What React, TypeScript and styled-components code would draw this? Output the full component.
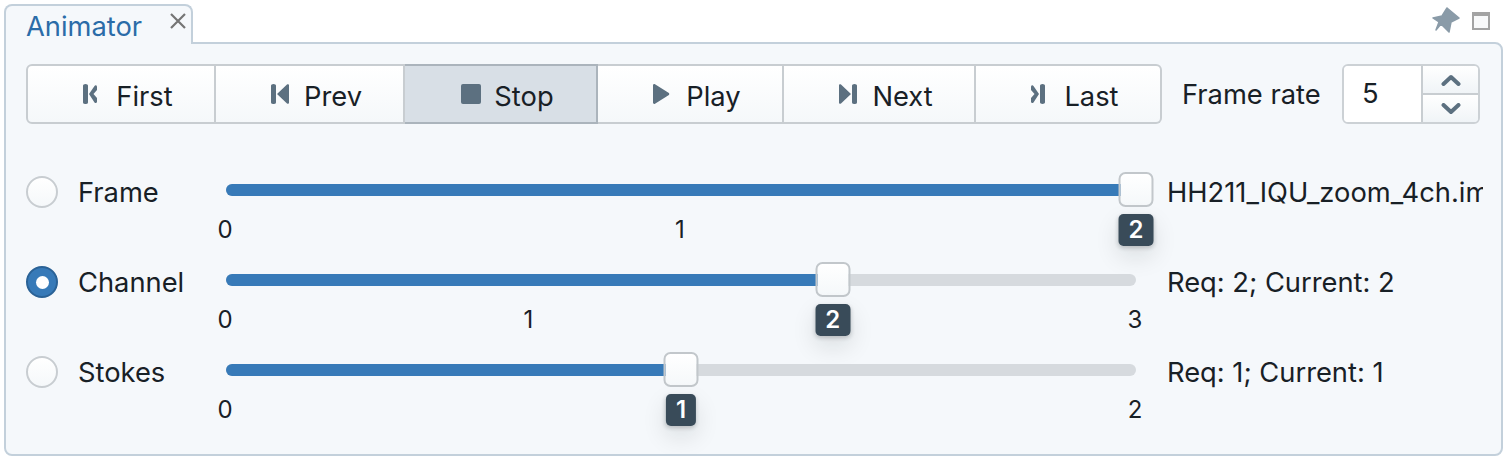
import { createGlobalStyle, styled } from "styled-components";

const GlobalStyle = createGlobalStyle`
  html, body {
    margin: 0;
    padding: 0;
    background: #ffffff;
  }
  body {
    font-family: Inter, "Liberation Sans", sans-serif;
    font-size: 27.3px;
    color: #182026;
  }
`;

const Page = styled.div`
  width: 1512px;
  height: 464px;
  padding: 4px 9px 8px 4px;
  box-sizing: border-box;
  display: flex;
  flex-direction: column;
`;

const TabBar = styled.div`
  display: flex;
  justify-content: space-between;
  height: 38px;
  position: relative;
  z-index: 1;
`;

const Tab = styled.div`
  width: 189px;
  height: 40px;
  box-sizing: border-box;
  background: #f5f8fb;
  border: 2px solid #c3d0db;
  border-bottom: none;
  border-radius: 8px 8px 0 0;
  display: flex;
  justify-content: space-between;
  padding: 0 5px 0 20px;
`;

const TabTitle = styled.span`
  color: #2b6ca8;
  line-height: 42px;
`;

const CloseButton = styled.svg`
  width: 16px;
  height: 16px;
  margin-top: 7px;
`;

const PanelControls = styled.div`
  display: flex;
  align-items: flex-start;
  gap: 12px;
  padding: 2px 13px 0 0;
`;

const PinIcon = styled.svg`
  width: 28px;
  height: 28px;
`;

const MaximizeBox = styled.div`
  width: 18px;
  height: 18px;
  box-sizing: border-box;
  margin-top: 6px;
  border: 2px solid #a3a3a3;
  border-top-width: 4px;
  background: #f8f9fa;
`;

const Panel = styled.div`
  flex: 1;
  box-sizing: border-box;
  background: #f5f8fb;
  border: 2px solid #c3d0db;
  border-radius: 0 8px 8px 8px;
  padding: 20px 18px 0 20px;
  overflow: hidden;
`;

const Toolbar = styled.div`
  display: flex;
  align-items: center;
  height: 60px;
`;

const ButtonGroup = styled.div`
  display: flex;
  height: 60px;
`;

const ToolButton = styled.div<{ $width: number; $active?: boolean }>`
  width: ${(p) => p.$width}px;
  box-sizing: border-box;
  display: flex;
  align-items: center;
  justify-content: center;
  gap: 13px;
  padding: 4px 0 0 14px;
  border: 2px solid ${(p) => (p.$active ? "#abb4bc" : "#c8cdd1")};
  border-left-width: 0;
  background: ${(p) =>
    p.$active ? "#d8dfe6" : "linear-gradient(#ffffff, #f5f8fa)"};
  &:first-child {
    border-left-width: 2px;
    border-radius: 6px 0 0 6px;
  }
  &:last-child {
    border-radius: 0 6px 6px 0;
  }
`;

const ButtonIcon = styled.svg`
  width: 20px;
  height: 20px;
  margin-top: -4px;
  fill: #5c7080;
`;

const RateLabel = styled.span`
  margin-left: 20px;
  width: 160px;
`;

const Spinner = styled.div`
  width: 138px;
  height: 60px;
  box-sizing: border-box;
  display: flex;
  border: 2px solid #ccd1d5;
  border-radius: 6px;
  overflow: hidden;
`;

const SpinnerValue = styled.div`
  width: 77px;
  background: #ffffff;
  padding-left: 18px;
  box-sizing: border-box;
  line-height: 56px;
`;

const SpinnerButtons = styled.div`
  flex: 1;
  display: flex;
  flex-direction: column;
  border-left: 2px solid #c8cdd1;
`;

const SpinnerButton = styled.div`
  flex: 1;
  display: flex;
  align-items: center;
  justify-content: center;
  background: linear-gradient(#ffffff, #f0f4f7);
  & + & {
    border-top: 2px solid #c8cdd1;
  }
`;

const Chevron = styled.svg`
  width: 20px;
  height: 12px;
`;

const Rows = styled.div`
  display: flex;
  flex-direction: column;
  margin-top: 40px;
`;

const Row = styled.div`
  height: 90px;
  display: flex;
  align-items: flex-start;
`;

const Radio = styled.div<{ $checked?: boolean }>`
  width: 32px;
  height: 32px;
  margin-top: 12px;
  box-sizing: border-box;
  flex: none;
  border-radius: 50%;
  border: 2px solid ${(p) => (p.$checked ? "#2a6296" : "#c8cdd1")};
  background: ${(p) =>
    p.$checked ? "#377ab8" : "linear-gradient(#ffffff, #f5f8fa)"};
  display: flex;
  align-items: center;
  justify-content: center;
  &::after {
    content: "";
    width: 13px;
    height: 13px;
    border-radius: 50%;
    background: ${(p) => (p.$checked ? "#ffffff" : "transparent")};
  }
`;

const RowLabel = styled.span`
  width: 148px;
  margin-left: 20px;
  flex: none;
  line-height: 34px;
  margin-top: 12px;
`;

const Slider = styled.div`
  position: relative;
  width: 910px;
  height: 12px;
  margin-top: 20px;
  flex: none;
  background: #d6dade;
  border-radius: 6px;
`;

const SliderFill = styled.div`
  height: 12px;
  background: #377ab8;
  border-radius: 6px 0 0 6px;
`;

const Tick = styled.span`
  position: absolute;
  top: 32px;
  line-height: 28px;
  font-size: 24px;
  transform: translateX(calc(-50% - 1px));
`;

const Handle = styled.div`
  position: absolute;
  top: -12px;
  width: 35px;
  height: 35px;
  box-sizing: border-box;
  transform: translateX(-50%);
  background: linear-gradient(#ffffff, #f5f8fa);
  border: 2px solid #c2c7cb;
  border-radius: 7px;
`;

const ValueTag = styled.div`
  position: absolute;
  top: 30px;
  padding: 0 10px;
  height: 32px;
  box-sizing: border-box;
  transform: translateX(-50%);
  background: #394b59;
  color: #ffffff;
  border-radius: 5px;
  font-size: 24px;
  font-weight: 600;
  line-height: 32px;
  text-align: center;
  box-shadow: 0 2px 4px rgba(16, 22, 26, 0.2), 0 10px 24px rgba(16, 22, 26, 0.12);
`;

const RowInfo = styled.span`
  margin-left: 31px;
  flex: 1;
  min-width: 0;
  overflow: hidden;
  white-space: nowrap;
  line-height: 34px;
  margin-top: 12px;
`;

const buttons = [
  { name: "First", width: 190, path: "M0 1.500a2.500 1.500 0 0 1 5 0v17a2.500 1.500 0 0 1-5 0zM6 10l5.500-8c1-1.300 2.500-.5 2.500 1v3L10.500 10l3.500 4v3.500c0 1.500-1.500 2-2.500 1z" },
  { name: "Prev", width: 189, path: "M0 1.500a2.500 1.500 0 0 1 5 0v17a2.500 1.500 0 0 1-5 0zM6 10 16 .5c1-.8 2-.2 2 1v17c0 1.200-1 1.800-2 1z" },
  { name: "Stop", width: 193, active: true, path: "M2 0h16a2 2 0 0 1 2 2v16a2 2 0 0 1-2 2H2a2 2 0 0 1-2-2V2a2 2 0 0 1 2-2z" },
  { name: "Play", width: 186, path: "M0 1.500C0 .3 1 -.3 2 .3l13.500 8.500c1 .6 1 1.800 0 2.400L2 19.700c-1 .6-2 0-2-1.200z" },
  { name: "Next", width: 192, path: "M18 1.500a2.500 1.500 0 0 0-5 0v17a2.500 1.500 0 0 0 5 0zM12 10 2 .5C1-.3 0 .3 0 1.500v17c0 1.200 1 1.800 2 1z" },
  { name: "Last", width: 186, path: "M14 1.500a2.500 1.500 0 0 0-5 0v17a2.500 1.500 0 0 0 5 0zM8 10 2.500 2C1.500.7 0 1.500 0 3v3l3.500 4L0 14v3.500c0 1.500 1.500 2 2.500 1z" },
];

const rows = [
  { name: "Frame", value: 2, max: 2, ticks: [0, 1, 2], info: "HH211_IQU_zoom_4ch.image" },
  { name: "Channel", value: 2, max: 3, ticks: [0, 1, 2, 3], info: "Req: 2; Current: 2", checked: true },
  { name: "Stokes", value: 1, max: 2, ticks: [0, 1, 2], info: "Req: 1; Current: 1" },
];

export default function App() {
  return (
    <Page>
      <GlobalStyle />
      <TabBar>
        <Tab>
          <TabTitle>Animator</TabTitle>
          <CloseButton viewBox="0 0 16 16">
            <path d="M1 1 15 15M15 1 1 15" stroke="#757575" strokeWidth="2.200" />
          </CloseButton>
        </Tab>
        <PanelControls>
          <PinIcon viewBox="0 0 28 28">
            <path
              d="M1 12 10 10 15 2 27 12 19 16 17 26 9 18 4 24 7 16z"
              fill="#8a9ba8"
              stroke="#8a9ba8"
              strokeWidth="1.500"
              strokeLinejoin="round"
            />
          </PinIcon>
          <MaximizeBox />
        </PanelControls>
      </TabBar>
      <Panel>
        <Toolbar>
          <ButtonGroup>
            {buttons.map((b) => (
              <ToolButton key={b.name} $width={b.width} $active={b.active}>
                <ButtonIcon viewBox="0 0 20 20">
                  <path d={b.path} />
                </ButtonIcon>
                {b.name}
              </ToolButton>
            ))}
          </ButtonGroup>
          <RateLabel>Frame rate</RateLabel>
          <Spinner>
            <SpinnerValue>5</SpinnerValue>
            <SpinnerButtons>
              <SpinnerButton>
                <Chevron viewBox="0 0 20 12">
                  <path d="M2.500 10 10 3l7.500 7" fill="none" stroke="#5c7080" strokeWidth="4" strokeLinecap="round" strokeLinejoin="round" />
                </Chevron>
              </SpinnerButton>
              <SpinnerButton>
                <Chevron viewBox="0 0 20 12">
                  <path d="M2.500 2 10 9l7.500-7" fill="none" stroke="#5c7080" strokeWidth="4" strokeLinecap="round" strokeLinejoin="round" />
                </Chevron>
              </SpinnerButton>
            </SpinnerButtons>
          </Spinner>
        </Toolbar>
        <Rows>
          {rows.map((r) => {
            const pct = (r.value / r.max) * 100;
            return (
              <Row key={r.name}>
                <Radio $checked={r.checked} />
                <RowLabel>{r.name}</RowLabel>
                <Slider>
                  <SliderFill style={{ width: `${pct}%` }} />
                  {r.ticks
                    .filter((t) => t !== r.value)
                    .map((t) => (
                      <Tick key={t} style={{ left: `${(t / r.max) * 100}%` }}>
                        {t}
                      </Tick>
                    ))}
                  <Handle style={{ left: `${pct}%` }} />
                  <ValueTag style={{ left: `${pct}%` }}>{r.value}</ValueTag>
                </Slider>
                <RowInfo>{r.info}</RowInfo>
              </Row>
            );
          })}
        </Rows>
      </Panel>
    </Page>
  );
}
